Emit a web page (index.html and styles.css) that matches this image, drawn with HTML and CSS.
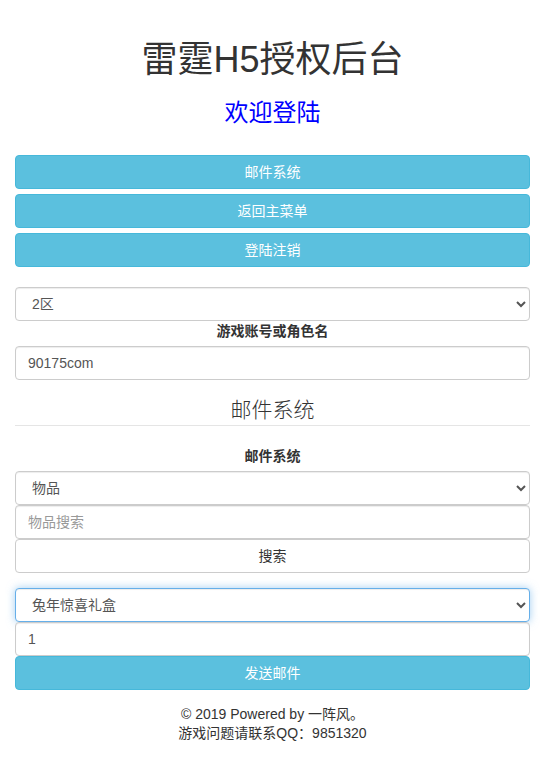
FILE: index.html
```html
<!DOCTYPE html>
<html lang="zh-CN">
<head>
<meta charset="utf-8">
<title>雷霆H5授权后台</title>
<link rel="stylesheet" href="styles.css">
</head>
<body>
<div class="container">
  <header class="head">
    <h1 class="title">雷霆H5授权后台</h1>
    <h3 class="welcome">欢迎登陆</h3>
  </header>

  <nav class="menu">
    <button class="btn btn-info">邮件系统</button>
    <button class="btn btn-info">返回主菜单</button>
    <button class="btn btn-info">登陆注销</button>
  </nav>

  <div class="form-group">
    <select class="form-control">
      <option>2区</option>
    </select>
    <label class="label">游戏账号或角色名</label>
    <input class="form-control" type="text" value="90175com">
  </div>

  <fieldset class="fieldset">
    <legend class="legend">邮件系统</legend>
    <label class="label">邮件系统</label>
    <div class="stack">
      <select class="form-control">
        <option>物品</option>
      </select>
      <input class="form-control" type="text" placeholder="物品搜索">
      <button class="btn btn-default">搜索</button>
    </div>
    <div class="stack send">
      <select class="form-control focus">
        <option>兔年惊喜礼盒</option>
      </select>
      <input class="form-control" type="text" value="1">
      <button class="btn btn-info">发送邮件</button>
    </div>
  </fieldset>

  <footer class="footer">
    <p>© 2019 Powered by 一阵风。</p>
    <p>游戏问题请联系QQ：9851320</p>
  </footer>
</div>
</body>
</html>
```

FILE: styles.css
```css
* { box-sizing: border-box; }
html, body { margin: 0; padding: 0; background: #fff; }
body {
  font-family: "Liberation Sans", "Noto Sans CJK SC", sans-serif;
  font-size: 14px;
  line-height: 1.42857;
  color: #333;
}
.container { padding: 0 15px; }

.head { text-align: center; padding-top: 20px; }
.title {
  margin: 20px 0 10px;
  font-size: 36px;
  line-height: 1.1;
  font-weight: 400;
  color: #333;
}
.welcome {
  margin: 20px 0 10px;
  font-size: 24px;
  line-height: 1.1;
  font-weight: 400;
  color: #0000ff;
}

.menu { display: flex; flex-direction: column; gap: 5px; margin-top: 29px; margin-bottom: 20px; }

.btn {
  display: block;
  width: 100%;
  height: 34px;
  padding: 6px 12px;
  font-family: inherit;
  font-size: 14px;
  line-height: 20px;
  border: 1px solid transparent;
  border-radius: 4px;
  text-align: center;
  cursor: pointer;
}
.btn-info { color: #fff; background: #5bc0de; border-color: #46b8da; }
.btn-default { color: #333; background: #fff; border-color: #ccc; }

.form-control {
  display: block;
  width: 100%;
  height: 34px;
  padding: 6px 12px;
  font-family: inherit;
  font-size: 14px;
  line-height: 20px;
  color: #555;
  background: #fff;
  border: 1px solid #ccc;
  border-radius: 4px;
  box-shadow: inset 0 1px 1px rgba(0,0,0,.075);
  margin: 0;
}
.form-control::placeholder { color: #999; }
.form-control.focus {
  border-color: #66afe9;
  box-shadow: inset 0 1px 1px rgba(0,0,0,.075), 0 0 8px rgba(102,175,233,.6);
}

.form-group { margin-bottom: 15px; display: flex; flex-direction: column; }
.label {
  display: block;
  text-align: center;
  font-weight: 700;
  margin-bottom: 5px;
  line-height: 20px;
}

.fieldset { border: 0; margin: 0; padding: 0; min-width: 0; }
.legend {
  display: block;
  width: 100%;
  padding: 0;
  margin-bottom: 20px;
  font-size: 21px;
  line-height: inherit;
  color: #333;
  border-bottom: 1px solid #e5e5e5;
  text-align: center;
  font-weight: 300;
}
.stack { display: flex; flex-direction: column; }
.send { margin-top: 15px; }

.footer { text-align: center; margin-top: 15px; line-height: 19px; }
.footer p { margin: 0; }
```
